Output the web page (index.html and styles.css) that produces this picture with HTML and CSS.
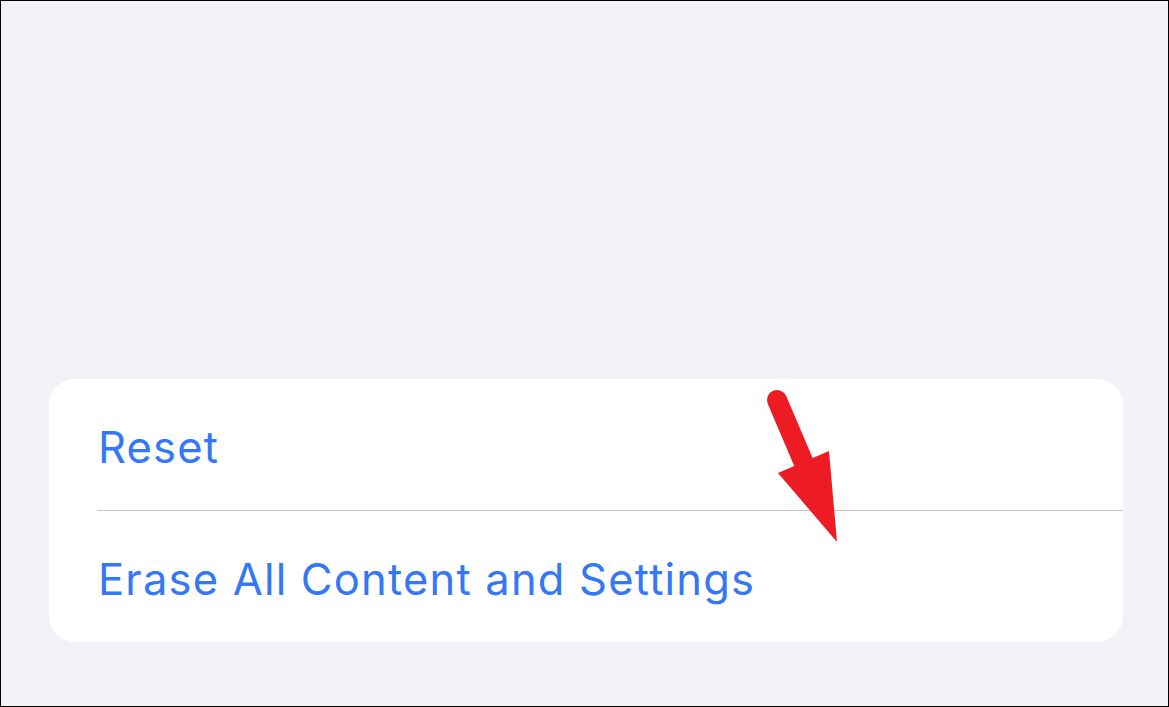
FILE: index.html
```html
<!DOCTYPE html>
<html>
<head>
<meta charset="utf-8">
<link rel="stylesheet" href="styles.css">
</head>
<body>
<div class="frame">
  <div class="card">
    <div class="row"><span class="label">Reset</span></div>
    <div class="row"><span class="label">Erase All Content and Settings</span></div>
  </div>
  <svg class="arrow" width="1169" height="707" viewBox="0 0 1169 707">
    <line x1="777" y1="400" x2="806" y2="468" stroke="#ed1c24" stroke-width="20" stroke-linecap="round"/>
    <polygon points="778,473 829,451 837,542" fill="#ed1c24"/>
  </svg>
</div>
</body>
</html>
```
FILE: styles.css
```css
html, body {
  margin: 0;
  padding: 0;
}
body {
  background: #f2f2f7;
  font-family: Inter, "Noto Sans", sans-serif;
}
.frame {
  position: relative;
  box-sizing: border-box;
  width: 1169px;
  height: 707px;
  border: 1px solid #000;
  background: #f2f2f7;
  display: flex;
  flex-direction: column;
  justify-content: flex-end;
  padding: 0 45px 64px 48px;
}
.card {
  background: #fff;
  border-radius: 26px;
  padding-left: 48px;
  overflow: hidden;
}
.row {
  height: 131px;
  display: flex;
  align-items: center;
  box-sizing: border-box;
}
.row + .row {
  height: 132px;
  border-top: 1px solid #c6c6c8;
}
.label {
  color: #3478f6;
  font-size: 43.5px;
  letter-spacing: 1.2px;
  padding-top: 4px;
  padding-left: 1px;
}
.arrow {
  position: absolute;
  left: -1px;
  top: -1px;
  pointer-events: none;
}
```
